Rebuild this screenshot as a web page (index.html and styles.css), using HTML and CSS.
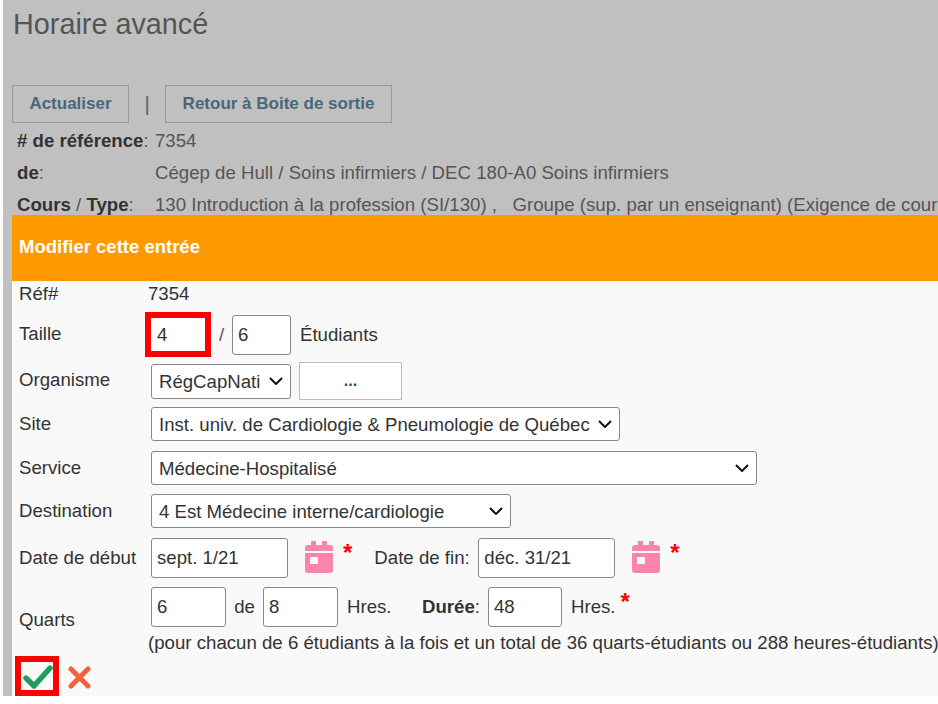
FILE: index.html
```html
<!DOCTYPE html>
<html lang="fr">
<head>
<meta charset="utf-8">
<title>Horaire avancé</title>
<link rel="stylesheet" href="styles.css">
</head>
<body>
<div class="page">
  <header class="top">
    <h1 class="title">Horaire avancé</h1>
    <div class="actions">
      <button class="btn btn-a" type="button">Actualiser</button>
      <span class="sep">|</span>
      <button class="btn btn-b" type="button">Retour à Boite de sortie</button>
    </div>
    <dl class="info">
      <div class="info-row"><dt class="info-k"><b># de référence</b>:</dt><dd class="info-v info-v-first">7354</dd></div>
      <div class="info-row"><dt class="info-k"><b>de</b>:</dt><dd class="info-v">Cégep de Hull / Soins infirmiers / DEC 180-A0 Soins infirmiers</dd></div>
      <div class="info-row"><dt class="info-k"><b>Cours</b> / <b>Type</b>:</dt><dd class="info-v">130 Introduction à la profession (SI/130) ,&nbsp;&nbsp; Groupe (sup. par un enseignant) (Exigence de cours)</dd></div>
    </dl>
  </header>
  <section class="panel">
    <h2 class="panel-head">Modifier cette entrée</h2>
    <form class="form">
      <div class="row row-ref"><span class="lbl">Réf#</span><span class="val-ref">7354</span></div>
      <div class="row row-taille"><span class="lbl lbl-taille">Taille</span>
        <input class="inp inp-red" value="4"><span class="slash">/</span><input class="inp inp-six" value="6"><span class="etud">Étudiants</span>
      </div>
      <div class="row row-org"><span class="lbl lbl-org">Organisme</span>
        <select class="sel sel-org"><option>RégCapNati</option></select>
        <button class="dots" type="button">...</button>
      </div>
      <div class="row row-sel row-site"><span class="lbl">Site</span>
        <select class="sel sel-site"><option>Inst. univ. de Cardiologie &amp; Pneumologie de Québec</option></select>
      </div>
      <div class="row row-sel row-serv"><span class="lbl">Service</span>
        <select class="sel sel-serv"><option>Médecine-Hospitalisé</option></select>
      </div>
      <div class="row row-sel row-dest"><span class="lbl">Destination</span>
        <select class="sel sel-dest"><option>4 Est Médecine interne/cardiologie</option></select>
      </div>
      <div class="row row-date"><span class="lbl">Date de début</span>
        <input class="inp inp-date" value="sept. 1/21">
        <svg class="cal" viewBox="0 0 28 32" aria-hidden="true"><path d="M6 0h5v4H17V0h5v4h3a3 3 0 0 1 3 3v3H0V7a3 3 0 0 1 3-3h3zM0 12h28v17a3 3 0 0 1-3 3H3a3 3 0 0 1-3-3zM5 16v7h8v-7z" fill="#fb84ad" fill-rule="evenodd"/></svg>
        <span class="star">*</span>
        <span class="fin-lbl">Date de fin:</span>
        <input class="inp inp-date inp-fin" value="déc. 31/21">
        <svg class="cal" viewBox="0 0 28 32" aria-hidden="true"><path d="M6 0h5v4H17V0h5v4h3a3 3 0 0 1 3 3v3H0V7a3 3 0 0 1 3-3h3zM0 12h28v17a3 3 0 0 1-3 3H3a3 3 0 0 1-3-3zM5 16v7h8v-7z" fill="#fb84ad" fill-rule="evenodd"/></svg>
        <span class="star">*</span>
      </div>
      <div class="row row-quarts"><span class="lbl lbl-quarts">Quarts</span>
        <input class="inp inp-q" value="6"><span class="de">de</span><input class="inp inp-q" value="8"><span class="hres">Hres.</span>
        <span class="duree"><b>Durée</b>:</span><input class="inp inp-q inp-dur" value="48"><span class="hres hres-2">Hres.</span><span class="star star-q">*</span>
      </div>
      <p class="note">(pour chacun de 6 étudiants à la fois et un total de 36 quarts-étudiants ou 288 heures-étudiants)</p>
      <div class="row-act">
        <span class="okbox">
          <svg class="ok" viewBox="0 0 30 24" aria-hidden="true"><path d="M3 13l8 8L27 3" fill="none" stroke="#1f9d5b" stroke-width="5.4" stroke-linecap="round" stroke-linejoin="round"/></svg>
        </span>
        <svg class="no" viewBox="0 0 23 23" aria-hidden="true"><path d="M3 3l17 17M20 3L3 20" fill="none" stroke="#f4623c" stroke-width="5" stroke-linecap="round"/></svg>
      </div>
    </form>
  </section>
</div>
</body>
</html>
```
FILE: styles.css
```css
html, body { margin: 0; padding: 0; background: #fff; height: 704px; overflow: hidden; }
body { font-family: "Liberation Sans", Arial, sans-serif; font-size: 18.65px; color: #333; }
.page { margin-left: 3px; width: 935px; height: 696px; background: #c0c0c0; padding-left: 9px; box-sizing: border-box; overflow: hidden; display: flex; flex-direction: column; }

.top { height: 215px; flex: none; overflow: hidden; }
.title { margin: 0; padding: 8px 0 0 1px; font-size: 28.8px; line-height: 32px; font-weight: 400; color: #555; height: 37px; }
.actions { display: flex; align-items: center; margin-top: 40px; height: 38px; }
.btn { height: 38px; box-sizing: border-box; background: transparent; border: 1px solid #999; font: bold 17px "Liberation Sans", Arial, sans-serif; color: #48687a; padding: 0; }
.btn-a { width: 117px; }
.btn-b { width: 227px; }
.sep { width: 36px; text-align: center; color: #48687a; font-size: 20px; }
.info { margin: 0; padding-left: 5px; }
.info-row { display: flex; height: 32px; line-height: 36px; white-space: nowrap; color: #555; }
.info-k { width: 138px; flex: none; color: #555; }
.info-k b { color: #333; }
.info-v { margin: 0; color: #555; }

.panel { flex: 1; background: #f9f9f9; min-height: 0; }
.panel-head { margin: 0; height: 66px; background: #ff9900; color: #fff; font-size: 18.5px; line-height: 64px; padding-left: 7px; font-weight: 700; box-sizing: border-box; }
.form { display: block; }
.row { display: flex; align-items: center; white-space: nowrap; }
.lbl { width: 139px; flex: none; padding-left: 7px; box-sizing: border-box; }

.row-ref { height: 26px; }
.val-ref { margin-left: -3px; }
.row-taille { height: 45px; margin-top: 5px; }
.lbl-taille { margin-top: -2px; }
.row-org { height: 38px; margin-top: 5px; }
.lbl-org { margin-top: -3px; }
.row-sel { height: 34px; }
.row-sel .lbl { margin-top: -1px; }
.row-site { margin-top: 7px; }
.row-serv { margin-top: 10px; }
.row-dest { margin-top: 9px; }
.row-date { height: 40px; margin-top: 10px; }
.row-quarts { height: 40px; margin-top: 9px; }
.lbl-quarts { margin-top: 26px; }

.inp { height: 40px; box-sizing: border-box; border: 1px solid #888; border-radius: 3px; background: #fff; font: 18.6px "Liberation Sans", Arial, sans-serif; color: #333; padding: 0 5px; margin: 0; }
.inp-red { width: 66px; height: 45px; margin-left: -6px; border: 6px solid #f00; border-radius: 0; padding: 0 0 0 6px; }
.slash { width: 21px; text-align: center; color: #555; }
.inp-six { width: 59px; }
.etud { margin-left: 9px; }

.sel { appearance: none; -webkit-appearance: none; height: 34px; box-sizing: border-box; border: 1px solid #888; border-radius: 3px; background: #fff url("data:image/svg+xml,%3Csvg xmlns='http://www.w3.org/2000/svg' width='14' height='8' viewBox='0 0 14 8'%3E%3Cpath d='M1 1l6 6 6-6' fill='none' stroke='%23111' stroke-width='2'/%3E%3C/svg%3E") no-repeat right 7px center; font: 18.6px "Liberation Sans", Arial, sans-serif; color: #333; padding: 0 0 0 7px; margin: 0; }
.sel-org { width: 140px; height: 35px; }
.dots { width: 103px; height: 38px; margin-left: 8px; background: #fff; border: 1px solid #bbb; font: bold 16px "Liberation Sans", Arial, sans-serif; color: #1c4f78; padding: 0; }
.sel-site { width: 469px; }
.sel-serv { width: 606px; }
.sel-dest { width: 360px; }

.inp-date { width: 137px; height: 40px; }
.cal { width: 28px; height: 32px; flex: none; margin: -3px 0 0 17px; }
.star { color: #f00; font-size: 24px; line-height: 24px; margin: -10px 0 0 10px; font-weight: 700; }
.fin-lbl { margin-left: 22px; width: 104px; }
.inp-q { width: 75px; }
.inp-dur { width: 74px; }
.de { width: 37px; text-align: center; }
.hres { margin-left: 9px; width: 75px; }
.duree { width: 66px; }
.hres-2 { width: auto; }
.star-q { margin: -10px 0 0 5px; }

.note { margin: 0; height: 29px; line-height: 32px; padding-left: 136px; white-space: nowrap; }
.row-act { display: flex; align-items: flex-start; height: 40px; }
.okbox { width: 44px; height: 40px; margin-left: 3px; border: 6px solid #f00; box-sizing: border-box; display: flex; background: #f9f9f9; }
.ok { width: 30px; height: 24px; flex: none; margin: 3px 0 0 2px; }
.no { width: 23px; height: 23px; flex: none; margin: 10px 0 0 9px; }
```
